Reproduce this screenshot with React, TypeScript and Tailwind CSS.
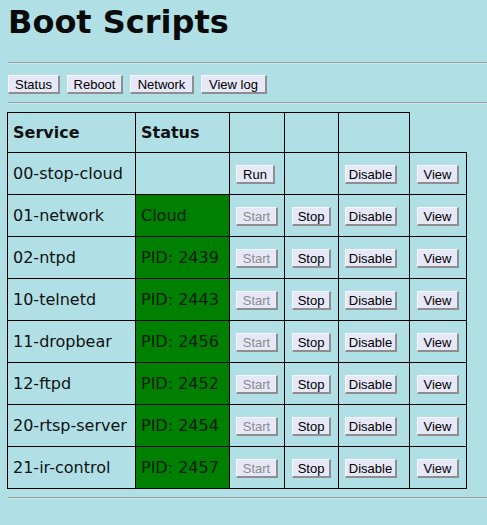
import clsx from "clsx";

type Service = {
  name: string;
  status: string | null;
  action: "Run" | "Start";
  stop: boolean;
};

const SERVICES: Service[] = [
  { name: "00-stop-cloud", status: null, action: "Run", stop: false },
  { name: "01-network", status: "Cloud", action: "Start", stop: true },
  { name: "02-ntpd", status: "PID: 2439", action: "Start", stop: true },
  { name: "10-telnetd", status: "PID: 2443", action: "Start", stop: true },
  { name: "11-dropbear", status: "PID: 2456", action: "Start", stop: true },
  { name: "12-ftpd", status: "PID: 2452", action: "Start", stop: true },
  { name: "20-rtsp-server", status: "PID: 2454", action: "Start", stop: true },
  { name: "21-ir-control", status: "PID: 2457", action: "Start", stop: true },
];

const NAV = [
  { label: "Status", w: "w-[52px]" },
  { label: "Reboot", w: "w-[56px]" },
  { label: "Network", w: "w-[64px]" },
  { label: "View log", w: "w-[66px]" },
];

function Btn({ label, w, disabled }: { label: string; w: string; disabled?: boolean }) {
  return (
    <button
      type="button"
      disabled={disabled}
      className={clsx(
        "inline-flex h-[19px] items-center justify-center border-t border-l border-t-[#f6f6fd] border-l-[#f6f6fd] border-r-2 border-b-2 border-r-[#8e8e8e] border-b-[#8e8e8e] bg-[#e6e7f7] font-['Liberation_Sans',Arial,sans-serif] text-[13px] leading-none",
        w,
        disabled ? "text-[#8c8c8c]" : "text-black"
      )}
    >
      {label}
    </button>
  );
}

function Rule() {
  return <div className="ml-2 h-[2px] border-t border-b border-t-[#9c9c9c] border-b-[#c4eaee]" />;
}

export default function App() {
  return (
    <div className="min-h-screen bg-[#b0e0e6] font-['DejaVu_Sans',Verdana,sans-serif] text-[#111]">
      <h1 className="ml-2 pt-[4px] text-[32px] font-bold leading-[37px] text-[#0a0a0a]">Boot Scripts</h1>
      <div className="mt-[21px]">
        <Rule />
      </div>

      <div className="ml-2 mt-[11px] flex gap-[7px]">
        {NAV.map((n) => (
          <Btn key={n.label} label={n.label} w={n.w} />
        ))}
      </div>

      <div className="mt-[8px]">
        <Rule />
      </div>

      <table className="ml-[7px] mt-[8px] w-[459px] table-fixed border-collapse text-[16px]">
        <colgroup>
          <col className="w-[128px]" />
          <col className="w-[94px]" />
          <col className="w-[55px]" />
          <col className="w-[54px]" />
          <col className="w-[71px]" />
          <col className="w-[57px]" />
        </colgroup>
        <thead>
          <tr className="h-[40px]">
            <th className="border border-black px-[5px] text-left align-middle font-bold">Service</th>
            <th className="border border-black px-[5px] text-left align-middle font-bold">Status</th>
            <th className="border border-black" />
            <th className="border border-black" />
            <th className="border border-black" />
          </tr>
        </thead>
        <tbody>
          {SERVICES.map((s) => (
            <tr key={s.name} className="h-[42px]">
              <td className="whitespace-nowrap border border-black px-[5px] align-middle">{s.name}</td>
              <td
                className={clsx(
                  "whitespace-nowrap border border-black px-[5px] align-middle",
                  s.status && "bg-[#008000] text-[#0c1a0c]"
                )}
              >
                {s.status}
              </td>
              <td className="border border-black pl-[6px] align-middle">
                {s.action === "Run" ? (
                  <Btn label="Run" w="w-[39px]" />
                ) : (
                  <Btn label="Start" w="w-[42px]" disabled />
                )}
              </td>
              <td className="border border-black pl-[7px] align-middle">
                {s.stop && <Btn label="Stop" w="w-[39px]" />}
              </td>
              <td className="border border-black pl-[6px] align-middle">
                <Btn label="Disable" w="w-[52px]" />
              </td>
              <td className="border border-black pl-[7px] align-middle">
                <Btn label="View" w="w-[42px]" />
              </td>
            </tr>
          ))}
        </tbody>
      </table>

      <div className="mt-[8px]">
        <Rule />
      </div>
    </div>
  );
}
